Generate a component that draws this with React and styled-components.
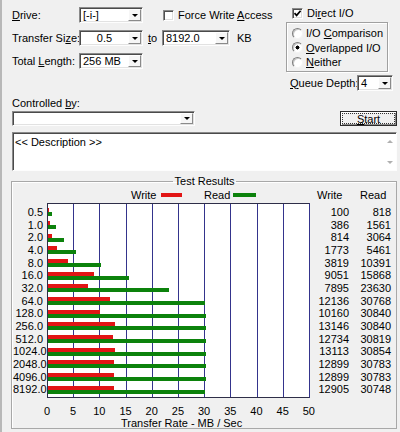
import React from 'react';
import styled, { createGlobalStyle } from 'styled-components';

const GlobalStyle = createGlobalStyle`
  html, body {
    margin: 0;
    padding: 0;
    background: #f0f0f0;
  }
  body {
    font-family: "Liberation Sans Narrow", "Liberation Sans", Arial, sans-serif;
    font-size: 11px;
    color: #000;
  }
  * {
    box-sizing: border-box;
  }
`;

const results = [
  ['0.5', 100, 818],
  ['1.0', 386, 1561],
  ['2.0', 814, 3064],
  ['4.0', 1773, 5461],
  ['8.0', 3819, 10391],
  ['16.0', 9051, 15868],
  ['32.0', 7895, 23630],
  ['64.0', 12136, 30768],
  ['128.0', 10160, 30840],
  ['256.0', 13146, 30840],
  ['512.0', 12734, 30819],
  ['1024.0', 13113, 30854],
  ['2048.0', 12899, 30783],
  ['4096.0', 12899, 30783],
  ['8192.0', 12905, 30748],
];

const ticks = [0, 5, 10, 15, 20, 25, 30, 35, 40, 45, 50];
const PX_PER_MB = 5.24;

const Window = styled.div`
  width: 400px;
  height: 432px;
  padding: 0 3px 0 11px;
  background: #f0f0f0;
  box-shadow: inset 2px 0 0 #b8b8b8;
  overflow: hidden;
`;

const TopArea = styled.div`
  display: flex;
  height: 91px;
`;

const FormGrid = styled.div`
  display: grid;
  grid-template-columns: 67px 64px 19px 68px auto;
  grid-auto-rows: 16px;
  row-gap: 7px;
  align-items: center;
  align-content: start;
  padding: 7px 0 0 1px;
`;

const Label = styled.span`
  white-space: nowrap;
  line-height: 13px;
  padding-left: ${p => p.$indent || 0}px;
`;

const Ul = styled.span`
  text-decoration: underline;
  text-underline-offset: 1px;
`;

const Combo = styled.div`
  display: flex;
  width: ${p => p.$w}px;
  height: ${p => p.$h || 16}px;
  background: #fff;
  border: 1px solid;
  border-color: #8a8a8a #fdfdfd #fdfdfd #8a8a8a;
  box-shadow: inset 1px 1px 0 #4a4a4a, inset -1px -1px 0 #e2e2e2;
  padding: 1px;
`;

const ComboText = styled.span`
  flex: 1;
  padding: 0 2px;
  line-height: 12px;
  white-space: nowrap;
  text-align: ${p => (p.$center ? 'center' : 'left')};
`;

const DropButton = styled.span`
  width: 13px;
  flex: none;
  display: flex;
  align-items: center;
  justify-content: center;
  background: #f6f6f6;
  border: 1px solid;
  border-color: #fff #8a8a8a #8a8a8a #fff;

  &::after {
    content: '';
    border-left: 3px solid transparent;
    border-right: 3px solid transparent;
    border-top: 3px solid #000;
  }
`;

const CheckRow = styled.label`
  display: flex;
  align-items: center;
  gap: 4px;
  height: 14px;
  white-space: nowrap;
  padding-left: ${p => p.$indent || 0}px;
  grid-column: ${p => p.$span || 'auto'};
`;

const CheckBox = styled.span`
  width: 11px;
  height: 11px;
  flex: none;
  display: flex;
  align-items: center;
  justify-content: center;
  background: #fff;
  border: 1px solid;
  border-color: #8a8a8a #fff #fff #8a8a8a;
  box-shadow: inset 1px 1px 0 #505050, inset -1px -1px 0 #dedede;
`;

const OptionsColumn = styled.div`
  margin-left: auto;
  margin-right: 4px;
  width: 107px;
  padding-top: 6px;
`;

const RadioGroup = styled.div`
  width: 102px;
  height: 50px;
  margin-top: 2px;
  padding: 3px 0 0 5px;
  border: 1px solid #a0a0a0;
  box-shadow: inset 1px 1px 0 #fff, 1px 1px 0 #fff;
`;

const RadioRow = styled.label`
  display: flex;
  align-items: center;
  gap: 3px;
  height: 14.5px;
  white-space: nowrap;
`;

const RadioDot = styled.span`
  width: 11px;
  height: 11px;
  flex: none;
  border-radius: 50%;
  border: 1px solid;
  border-color: #7e7e7e #f4f4f4 #f4f4f4 #7e7e7e;
  background: ${p =>
    p.$on ? 'radial-gradient(circle, #000 0 1.8px, #fff 2.2px)' : '#fff'};
  box-shadow: inset 1px 1px 0 #c8c8c8;
`;

const QueueRow = styled.div`
  display: flex;
  align-items: center;
  margin-top: 3px;
  padding-left: 4px;
`;

const QueueLabel = styled(Label)`
  width: 67px;
`;

const ControlLabel = styled.div`
  margin-top: 6px;
  padding-left: 1px;
  line-height: 13px;
`;

const ControlRow = styled.div`
  display: flex;
  align-items: center;
  justify-content: space-between;
  margin-top: 1px;
  padding-left: 1px;
`;

const StartButton = styled.button`
  width: 57px;
  height: 15px;
  padding: 1px;
  font: inherit;
  color: #000;
  background: #f0f0f0;
  border: 1px solid #2a2a2a;
  box-shadow: inset 1px 1px 0 #fff, inset -1px -1px 0 #8a8a8a;
  display: flex;
`;

const FocusRect = styled.span`
  flex: 1;
  border: 1px dotted #333;
  line-height: 10px;
  text-align: center;
`;

const DescBox = styled.div`
  display: flex;
  height: 39px;
  margin: 6px 0 0 1px;
  background: #fff;
  border: 1px solid;
  border-color: #8a8a8a #fdfdfd #fdfdfd #8a8a8a;
  box-shadow: inset 1px 1px 0 #4a4a4a;
`;

const DescText = styled.div`
  flex: 1;
  padding: 3px 2px;
  line-height: 12px;
`;

const ScrollCol = styled.div`
  width: 12px;
  display: flex;
  flex-direction: column;
  justify-content: space-between;
  align-items: center;
  padding: 7px 0 6px;
`;

const ScrollArrow = styled.span`
  border-left: 3px solid transparent;
  border-right: 3px solid transparent;
  ${p =>
    p.$up
      ? 'border-bottom: 3px solid #b0b0b0;'
      : 'border-top: 3px solid #b0b0b0;'}
`;

const GroupBox = styled.fieldset`
  margin: 3.5px 0 0;
  padding: 0 0 0 1px;
  min-width: 0;
  border: 1px solid #a8a8a8;
  box-shadow: inset 1px 1px 0 #fff;
`;

const GroupTitle = styled.legend`
  margin: 0 auto;
  padding: 0 2px;
  line-height: 13px;
`;

const LegendRow = styled.div`
  display: flex;
  align-items: center;
  height: 15px;
  white-space: nowrap;
`;

const LegendText = styled.span`
  width: ${p => p.$w}px;
  margin-left: ${p => p.$ml || 0}px;
  flex: none;
`;

const Swatch = styled.span`
  width: ${p => p.$w}px;
  height: 4px;
  flex: none;
  background: ${p => p.$color};
`;

const ChartBody = styled.div`
  display: flex;
  align-items: flex-start;
`;

const NumberCol = styled.div`
  width: ${p => p.$w}px;
  flex: none;
  padding-top: 3.35px;
  padding-right: ${p => p.$pr || 0}px;
  margin-right: ${p => p.$mr || 0}px;
  text-align: right;
`;

const NumberCell = styled.div`
  height: 12.7px;
  line-height: 12.7px;
  white-space: nowrap;
`;

const Plot = styled.div`
  width: 263px;
  height: 195px;
  flex: none;
  padding-top: 2.35px;
  border: 1px solid #2e2e48;
  border-right-color: #34348c;
  background-color: #fff;
  background-image: repeating-linear-gradient(
    to right,
    transparent 0,
    transparent 25.2px,
    #34348c 25.2px,
    #34348c 26.2px
  );
`;

const BarRow = styled.div`
  height: 12.7px;
  display: flex;
  flex-direction: column;
  justify-content: center;
`;

const Bar = styled.div`
  height: 4px;
  background: ${p => p.$color};
`;

const AxisRow = styled.div`
  display: flex;
  height: 13px;
  margin: 7px 0 0 20.9px;
`;

const Tick = styled.span`
  width: 26.2px;
  flex: none;
  text-align: center;
  line-height: 13px;
`;

const AxisTitle = styled.div`
  height: 10px;
  line-height: 10px;
  padding-left: 108px;
  white-space: nowrap;
`;

const RED = '#e21515';
const GREEN = '#0c820c';

const Check = () => (
  <svg width="9" height="9" viewBox="0 0 9 9">
    <path d="M1.5 4.2 L3.6 6.4 L7.6 1.8" fill="none" stroke="#000" strokeWidth="1.7" />
  </svg>
);

const barWidth = kb => `${(kb / 1024) * PX_PER_MB}px`;

const App = () => (
  <>
    <GlobalStyle />
    <Window>
      <TopArea>
        <FormGrid>
          <Label><Ul>D</Ul>rive:</Label>
          <Combo $w={64}>
            <ComboText>[-i-]</ComboText>
            <DropButton />
          </Combo>
          <span />
          <CheckRow $span="4 / span 2" $indent={1}>
            <CheckBox />
            <span>Force Write <Ul>A</Ul>ccess</span>
          </CheckRow>

          <Label>Transfer Si<Ul>z</Ul>e:</Label>
          <Combo $w={64}>
            <ComboText $center>0.5</ComboText>
            <DropButton />
          </Combo>
          <Label $indent={5}><Ul>t</Ul>o</Label>
          <Combo $w={68}>
            <ComboText>8192.0</ComboText>
            <DropButton />
          </Combo>
          <Label $indent={7}>KB</Label>

          <Label>Total <Ul>L</Ul>ength:</Label>
          <Combo $w={64}>
            <ComboText>256 MB</ComboText>
            <DropButton />
          </Combo>
        </FormGrid>

        <OptionsColumn>
          <CheckRow $indent={6}>
            <CheckBox><Check /></CheckBox>
            <span>Di<Ul>r</Ul>ect I/O</span>
          </CheckRow>
          <RadioGroup>
            <RadioRow>
              <RadioDot />
              <span>I/O <Ul>C</Ul>omparison</span>
            </RadioRow>
            <RadioRow>
              <RadioDot $on />
              <span><Ul>O</Ul>verlapped I/O</span>
            </RadioRow>
            <RadioRow>
              <RadioDot />
              <span><Ul>N</Ul>either</span>
            </RadioRow>
          </RadioGroup>
          <QueueRow>
            <QueueLabel><Ul>Q</Ul>ueue Depth:</QueueLabel>
            <Combo $w={36}>
              <ComboText>4</ComboText>
              <DropButton />
            </Combo>
          </QueueRow>
        </OptionsColumn>
      </TopArea>

      <ControlLabel>Controlled <Ul>b</Ul>y:</ControlLabel>
      <ControlRow>
        <Combo $w={183} $h={15}>
          <ComboText />
          <DropButton />
        </Combo>
        <StartButton>
          <FocusRect><Ul>S</Ul>tart</FocusRect>
        </StartButton>
      </ControlRow>

      <DescBox>
        <DescText>&lt;&lt; Description &gt;&gt;</DescText>
        <ScrollCol>
          <ScrollArrow $up />
          <ScrollArrow />
        </ScrollCol>
      </DescBox>

      <GroupBox>
        <GroupTitle>Test Results</GroupTitle>
        <LegendRow>
          <LegendText $ml={118} $w={30}>Write</LegendText>
          <Swatch $w={21} $color={RED} />
          <LegendText $ml={22} $w={29}>Read</LegendText>
          <Swatch $w={23} $color={GREEN} />
          <LegendText $ml={61} $w={43}>Write</LegendText>
          <LegendText $w={30}>Read</LegendText>
        </LegendRow>

        <ChartBody>
          <NumberCol $w={31} $pr={1} $mr={3}>
            {results.map(([size]) => (
              <NumberCell key={size}>{size}</NumberCell>
            ))}
          </NumberCol>
          <Plot>
            {results.map(([size, write, read]) => (
              <BarRow key={size}>
                <Bar $color={RED} style={{ width: barWidth(write) }} />
                <Bar $color={GREEN} style={{ width: barWidth(read) }} />
              </BarRow>
            ))}
          </Plot>
          <NumberCol $w={39}>
            {results.map(([size, write]) => (
              <NumberCell key={size}>{write}</NumberCell>
            ))}
          </NumberCol>
          <NumberCol $w={42}>
            {results.map(([size, , read]) => (
              <NumberCell key={size}>{read}</NumberCell>
            ))}
          </NumberCol>
        </ChartBody>

        <AxisRow>
          {ticks.map(t => (
            <Tick key={t}>{t}</Tick>
          ))}
        </AxisRow>
        <AxisTitle>Transfer Rate - MB / Sec</AxisTitle>
      </GroupBox>
    </Window>
  </>
);

export default App;
